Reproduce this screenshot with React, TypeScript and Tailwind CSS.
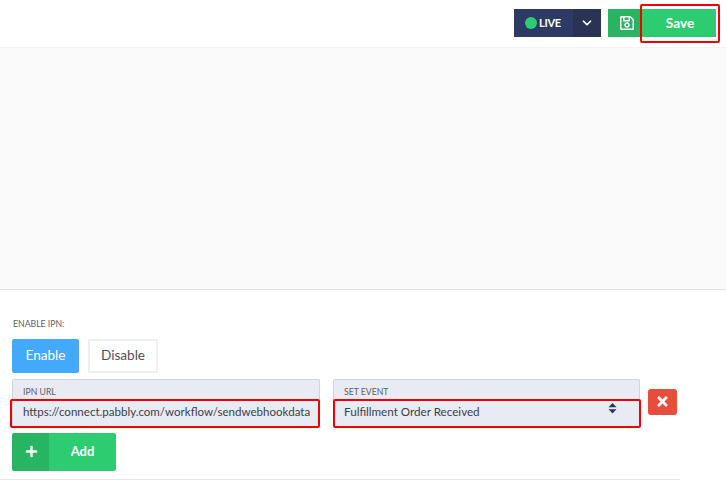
import React from 'react';
import { ChevronDown } from 'lucide-react';
import { FaPlus, FaRegSave, FaTimes } from 'react-icons/fa';

const App: React.FC = () => {
  return (
    <div className="w-[726px] h-[500px] overflow-hidden bg-white font-['Lato','Liberation_Sans',sans-serif] text-[#3f4254]">
      {/* top bar */}
      <div className="h-[48px] flex items-start justify-end pt-[9px] pr-[10px] border-b border-[#f3f3f3]">
        <div className="flex h-[28px] w-[87px] text-white bg-[#2e3a66]">
          <div className="flex-1 flex items-center pl-[11px] gap-[2px]">
            <span className="w-[12px] h-[12px] rounded-full bg-[#2ecc71]" />
            <span className="text-[11px] font-bold tracking-[-0.3px]">LIVE</span>
          </div>
          <div className="w-[28px] flex items-center justify-center bg-[#2a3256]">
            <ChevronDown size={14} strokeWidth={3} />
          </div>
        </div>
        <div className="ml-[7px] flex h-[28px] text-white font-bold text-[13.6px]">
          <div className="w-[32px] flex items-center justify-center pl-[6px] bg-[#28b463]">
            <FaRegSave size={16} />
          </div>
          <div className="relative w-[76px] flex items-center justify-center pl-[4px] bg-[#2ecc71]">
            Save
            <div className="absolute left-0 top-[-5px] w-[80px] h-[39px] border-2 border-[#f00000] rounded-[2px]" />
          </div>
        </div>
      </div>

      {/* empty canvas */}
      <div className="h-[242px] bg-[#fafafa] border-b border-[#e4e4e4]" />

      {/* IPN settings */}
      <div className="pt-[29px] pl-[12px]">
        <div className="h-[11px] flex items-center pl-[1px] text-[8.7px] leading-none text-[#5f6068]">ENABLE IPN:</div>
        <div className="mt-[9px] flex gap-[9px] text-[13.6px]">
          <div className="w-[67px] h-[34px] flex items-center justify-center pb-[2px] rounded-[2px] bg-[#42a9fd] text-white">Enable</div>
          <div className="w-[70px] h-[34px] flex items-center justify-center pb-[2px] border-2 border-[#efefef] text-[#50505a]">Disable</div>
        </div>

        <div className="mt-[6px] flex items-start">
          <div className="w-[308px] h-[48px] bg-[#e8ebf3] border-t border-x border-[#cfd4e0] rounded-t-[2px] relative">
            <div className="pl-[10px] pt-[6px] text-[8.7px] leading-[12px] text-[#5f6068]">IPN URL</div>
            <div className="absolute left-[-3px] right-[-1px] top-[19px] h-[29px] flex items-center pl-[11px] pb-[4px] border-2 border-[#f00000] rounded-[2px] text-[11.55px] text-[#3c3f4c] whitespace-nowrap">
              https://connect.pabbly.com/workflow/sendwebhookdata
            </div>
          </div>
          <div className="ml-[13px] w-[307px] h-[48px] bg-[#e8ebf3] border-t border-x border-[#cfd4e0] rounded-t-[2px] relative">
            <div className="pl-[10px] pt-[6px] text-[8.7px] leading-[12px] text-[#5f6068]">SET EVENT</div>
            <div className="absolute left-[-1px] right-[-2px] top-[19px] h-[29px] flex items-center justify-between pl-[9px] pr-[22px] pb-[4px] border-2 border-[#f00000] rounded-[2px] text-[11.65px] text-[#3c3f4c]">
              Fulfillment Order Received
              <svg width="9" height="11" viewBox="0 0 9 11" className="mb-[7px]">
                <path d="M4.5 0 L8.5 4.3 H0.5 Z M0.5 6.2 H8.5 L4.5 10.5 Z" fill="#2f3658" />
              </svg>
            </div>
          </div>
          <div className="ml-[8px] mt-[10px] w-[29px] h-[26px] flex items-center justify-center pb-[1px] rounded-[3px] bg-[#e74c3c] text-white">
            <FaTimes size={15} />
          </div>
        </div>

        <div className="mt-[6px] w-[104px] h-[38px] flex rounded-[2px] overflow-hidden text-white font-bold text-[13px]">
          <div className="w-[37px] flex items-center justify-center pl-[1px] pb-[1px] bg-[#28b463]">
            <FaPlus size={13} />
          </div>
          <div className="flex-1 flex items-center justify-center bg-[#2ecc71]">Add</div>
        </div>
      </div>

      <div className="mt-[8px] w-[680px] h-px bg-[#e8e8e8]" />
    </div>
  );
};

export default App;
